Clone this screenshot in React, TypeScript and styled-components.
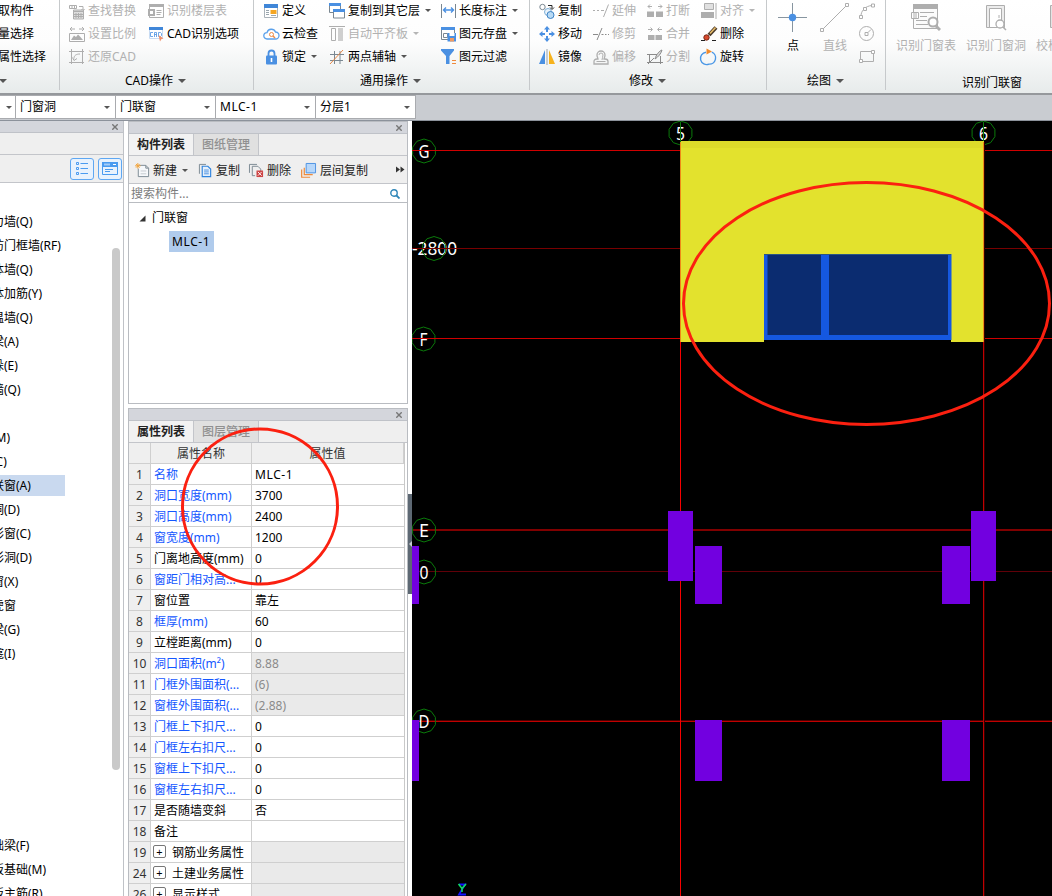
import React from 'react';
import styled, { createGlobalStyle } from 'styled-components';

const Global = createGlobalStyle`
  html, body { margin: 0; padding: 0; overflow: hidden; }
  body {
    font-family: "Noto Sans", "Noto Sans CJK SC", sans-serif;
    font-size: 12px;
    line-height: 16px;
    color: #000;
    background: #fff;
  }
  * { box-sizing: border-box; }
  svg { display: block; flex: none; }
`;

/* ---------- frame ---------- */

const Window = styled.div`
  position: relative;
  width: 1052px;
  height: 896px;
  overflow: hidden;
  display: flex;
  flex-direction: column;
  background: #fff;
`;

const Ribbon = styled.header`
  flex: none;
  height: 93px;
  display: flex;
  background: linear-gradient(#ffffff 0%, #fdfdfd 45%, #e7ebeb 100%);
`;

const Group = styled.section<{ $w: number }>`
  flex: none;
  position: relative;
  width: ${p => p.$w}px;
  display: flex;
  flex-direction: column;
  white-space: nowrap;

  &::after {
    content: "";
    position: absolute;
    right: 0;
    top: 0;
    width: 1px;
    height: 90px;
    background: #c6c9cb;
  }
`;

const GroupBody = styled.div`
  flex: none;
  display: flex;
  height: 69px;
  margin-top: -1px;
`;

const GroupTitle = styled.div<{ $left: number; $down?: boolean }>`
  display: flex;
  align-items: center;
  gap: 6px;
  height: 25px;
  padding-left: ${p => p.$left}px;
  padding-top: ${p => (p.$down ? 4 : 0)}px;
`;

const Column = styled.div<{ $w?: number; $left?: number }>`
  flex: none;
  display: flex;
  flex-direction: column;
  width: ${p => (p.$w ? p.$w + 'px' : 'auto')};
  margin-left: ${p => p.$left || 0}px;
`;

const ToolItem = styled.div<{ $off?: boolean }>`
  display: flex;
  align-items: center;
  gap: 3px;
  height: 23px;
  color: ${p => (p.$off ? '#b1b1b1' : '#000')};
`;

const Arrow = styled.i<{ $big?: boolean; $off?: boolean }>`
  flex: none;
  width: 0;
  height: 0;
  margin-left: ${p => (p.$big ? -1 : 2)}px;
  border: solid transparent;
  border-width: ${p => (p.$big ? '4px 4px 0' : '3px 3px 0')};
  border-top-color: ${p => (p.$off ? '#b5b5b5' : '#555')};
`;

const BigTool = styled.div<{ $w: number; $off?: boolean }>`
  flex: none;
  display: flex;
  flex-direction: column;
  align-items: center;
  width: ${p => p.$w}px;
  height: 56px;
  justify-content: space-between;
  padding-top: 3px;
  padding-bottom: 1px;
  color: ${p => (p.$off ? '#b1b1b1' : '#000')};
`;

const ComboBar = styled.div`
  flex: none;
  height: 28px;
  display: flex;
  align-items: flex-start;
  background: #c9ccd1;
  border-top: 2px solid #95989c;
  border-bottom: 1px solid #8c929b;
`;

const Combo = styled.div<{ $w: number; $wide?: boolean }>`
  flex: none;
  width: ${p => p.$w}px;
  height: 24px;
  display: flex;
  align-items: center;
  justify-content: space-between;
  padding: 0 5px 0 4px;
  letter-spacing: ${p => (p.$wide ? '0.5px' : 'normal')};
  background: #fff;
  border: solid #a9abaf;
  border-width: 1px 1px 1px 0;
`;

const Workspace = styled.main`
  flex: 1;
  min-height: 0;
  display: flex;
`;

/* ---------- docked panels ---------- */

const NavPanel = styled.aside`
  flex: none;
  width: 124px;
  display: flex;
  flex-direction: column;
  border-right: 1px solid #bfc2c7;
`;

const PanelBar = styled.div`
  flex: none;
  height: 12px;
  display: flex;
  align-items: center;
  justify-content: flex-end;
  padding: 1px 5px 0 0;
  background: #d4d6dc;
  border-bottom: 1px solid #bfc2c8;
`;

const NavBlank = styled.div`
  flex: none;
  height: 22px;
  background: #efefef;
  border-bottom: 1px solid #c3c5ca;
`;

const NavTools = styled.div`
  flex: none;
  height: 28px;
  display: flex;
  align-items: center;
  justify-content: flex-end;
  gap: 4px;
  padding-right: 1px;
  background: #efefef;
  border-bottom: 1px solid #c3c5ca;
`;

const ViewButton = styled.button`
  width: 24px;
  height: 22px;
  padding: 0;
  display: flex;
  align-items: center;
  justify-content: center;
  background: #e8f2fd;
  border: 1px solid #5ea7f2;
  border-radius: 3px;
`;

const NavBody = styled.div`
  flex: 1;
  display: flex;
  justify-content: space-between;
  overflow: hidden;
  padding: 4px 3px 0 0;
`;

const NavList = styled.div`
  width: 66px;
`;

const NavRow = styled.div<{ $on?: boolean }>`
  height: 21px;
  width: 65px;
  margin: 0 0 3px;
  line-height: 21px;
  text-indent: -20px;
  white-space: nowrap;
  overflow: hidden;
  background: ${p => (p.$on ? '#c9d9ef' : 'transparent')};
`;

const Thumb = styled.div`
  width: 8px;
  height: 522px;
  margin-top: 61px;
  border-radius: 4px;
  background: #c9c9c9;
`;

const MiddleColumn = styled.div`
  flex: none;
  width: 284px;
  display: flex;
`;

const Panels = styled.div`
  flex: none;
  width: 280px;
  margin-left: 4px;
  display: flex;
  flex-direction: column;
  gap: 4px;
`;

const Panel = styled.section<{ $h: number }>`
  flex: none;
  height: ${p => p.$h}px;
  display: flex;
  flex-direction: column;
  overflow: hidden;
  border: 1px solid #b9bcc1;
`;

const Tabs = styled.div`
  flex: none;
  height: 22px;
  display: flex;
  background: #efefef;
  border-bottom: 1px solid #c3c5ca;
`;

const Tab = styled.div<{ $on?: boolean }>`
  width: 65px;
  line-height: 21px;
  text-align: center;
  font-weight: ${p => (p.$on ? 600 : 500)};
  color: ${p => (p.$on ? '#222' : '#909090')};
  background: ${p => (p.$on ? '#f2f2f2' : '#e0e0e0')};
  border-right: 1px solid #c3c5ca;
`;

const ListTools = styled.div`
  flex: none;
  height: 28px;
  display: flex;
  align-items: center;
  padding-left: 6px;
  color: #222;
  background: #efefef;
  border-bottom: 1px solid #c3c5ca;
`;

const ListTool = styled.div<{ $w: number; $gap: number }>`
  width: ${p => p.$w}px;
  display: flex;
  align-items: center;
  gap: ${p => p.$gap}px;
  padding-top: 2px;
  white-space: nowrap;
`;

const Search = styled.div`
  flex: none;
  height: 19px;
  display: flex;
  align-items: center;
  justify-content: space-between;
  padding: 1px 7px 0 2px;
  color: #7c7c7c;
  border-bottom: 1px solid #b9bcc1;
`;

const Tree = styled.div`
  flex: 1;
  padding-top: 3px;
`;

const TreeRoot = styled.div`
  height: 24px;
  display: flex;
  align-items: center;
  gap: 6px;
  padding-left: 10px;
`;

const TreeLeaf = styled.div`
  width: 45px;
  height: 21px;
  margin: 1px 0 0 40px;
  padding-left: 3px;
  line-height: 21px;
  letter-spacing: 0.6px;
  background: #b0cbec;
`;

const Table = styled.div`
  width: 276px;
  border-right: 1px solid #c9c9c9;
`;

const TableRow = styled.div`
  display: grid;
  grid-template-columns: 22px 101px 1fr;
  height: 21px;
`;

const Cell = styled.div<{ $kind?: 'num' | 'head' | 'key' | 'linked' | 'value' | 'locked'; $wide?: boolean }>`
  display: flex;
  align-items: center;
  gap: 6px;
  min-width: 0;
  overflow: hidden;
  white-space: nowrap;
  padding-left: 3px;
  padding-top: 1px;
  letter-spacing: ${p => (p.$wide ? '0.6px' : 'normal')};
  border: solid #cfcfcf;
  border-width: 0 1px 1px 0;
  ${p => p.$kind === 'value' || p.$kind === 'locked' ? 'border-right: 0;' : ''}
  ${p => p.$kind === 'num' || p.$kind === 'head' ? 'justify-content: center; padding-left: 0; background: #efefef; color: #333;' : ''}
  ${p => p.$kind === 'linked' ? 'color: #1457ff;' : ''}
  ${p => p.$kind === 'locked' ? 'background: #eaeaea; color: #8a8a8a;' : ''}
`;

const Expand = styled.span`
  flex: none;
  width: 13px;
  height: 13px;
  margin: -2px 0 0 -1px;
  display: flex;
  align-items: center;
  justify-content: center;
  border: 1px solid #777;
  border-radius: 2px;
  font-size: 11px;
  line-height: 10px;
`;

const Splitter = styled.div`
  flex: none;
  width: 4px;
  height: 100px;
  margin-top: 373px;
  display: flex;
  align-items: center;
  background: #5d6873;
`;

const Viewport = styled.div`
  flex: 1;
  background: #000;
`;

const MarkLayer = styled.svg`
  position: absolute;
  left: 0;
  top: 0;
  pointer-events: none;
`;

/* ---------- icons ---------- */

const G = '#aeaeae';
const B = '#4a90e2';
const D = '#7a8791';

const icons: Record<string, React.ReactNode> = {
  find: <><path d="M0.5 2.5h7v3h-7zM3 2.5v3M5.5 2.5v3M10 3.5h4v4M12.5 6l1.5 2 1.5-2" /><path d="M4.500 7h10v9h-10z" fill="#dedede" /><path d="M4.500 8.500h10M7 10v5M9.500 10v5M12 10v5M5 11.500h9M5 13.500h9" /></>,
  scale: <><path d="M1 3h5M3 1L1 3l2 2M10 3h5M13 1l2 2-2 2M.5 7.500h15v8H.5z" /><path d="M2 14l3-4.500 2 1.500 2-2.500 2 2 3 3.500z" fill={G} stroke="none" /></>,
  restore: <><path d="M0 2.500h15M2.500 0v15M0 13.500h15M13.500 0v15M5 9.500c0-3 2-4.500 6-4.500M3.500 8.500l1.500 3 3-2" /></>,
  floor: <><path d="M1.500 1.500h14v13h-14z" /><path d="M1 1h15v3H1zM0 6h7v7H0z" fill={G} stroke="none" /><path d="M2 8h3v3H2z" fill="#fff" stroke="none" /><path d="M8.500 7.500h5M8.500 9.500h5M8.500 11.500h4" /></>,
  cad: <><path d="M1.500 1.500h13v11h-13z" stroke="#c9dcf3" fill="#fff" /><path d="M1 1h14v3H1z" fill="#3f86d8" stroke="none" /><path d="M5 6.500H2.500v4H5M6.500 11V6.500h2V11M6.500 8.500h2M10.500 6.500v4h2l1-1v-2l-1-1z" stroke={B} strokeWidth=".8" /><path d="M10.500 9l5 3.500-2 .5-1.500 2.500z" fill="#f0916c" stroke="none" /></>,
  define: <><path d="M1.500 2.500h13v12h-13z" stroke="#aab2b9" fill="#fff" /><path d="M1 1h14v4H1z" fill="#3f86d8" stroke="none" /><path d="M3 7.500h3M3 9.500h3M3 11.500h3M8 12.500h5" stroke="#9aa6ae" /><path d="M7.500 7h6v4h-6z" fill="#f5a623" stroke="none" /></>,
  cloud: <><path d="M4 13a3.200 3.200 0 010-6.400A4.500 4.500 0 0112.500 6 3.500 3.500 0 0112.500 13z" stroke="#5aa0ea" strokeWidth="1.300" /><circle cx="8.500" cy="8.500" r="2" stroke="#ee8b45" /><path d="M10 10l2 2" stroke="#ee8b45" strokeWidth="1.400" /></>,
  lock: <><path d="M5.500 7V4.500a3 3 0 016 0V7" stroke={B} strokeWidth="1.800" /><rect x="3" y="6.500" width="11" height="9" rx="1" fill={B} stroke="none" /><path d="M8.500 9v4" stroke="#fff" strokeWidth="1.600" /></>,
  copyFloor: <><path d="M.5 1.500h11v8H.5z" stroke={D} fill="#fff" /><path d="M0 0h12v3H0z" fill={B} stroke="none" /><path d="M4.500 7.500h11v7.500h-11z" stroke={D} fill="#fff" /><path d="M4 6h12v3H4z" fill={B} stroke="none" /></>,
  align: <><path d="M0 .5h16M2.500 2.500h4v12h-4z" /><path d="M9 2h5v13H9z" fill="#cfcfcf" stroke="none" /></>,
  axis: <><path d="M1 5.500h14M1 11.500h13M5.500 2v13M11 2v13" stroke={D} /><path d="M1 15L14 1" stroke="#e98845" /></>,
  measure: <><path d="M1.500 1v14M15.500 1v14" stroke={D} /><path d="M3.500 7h10M6 4.500L3.500 7 6 9.500M11 4.500L13.500 7 11 9.500" stroke={B} strokeWidth="1.400" /></>,
  save: <><path d="M1.500 1.500h13v12h-13z" stroke={D} fill="#fff" /><path d="M1 1h14v3H1z" fill={B} stroke="none" /><path d="M3.500 7.500h4v4h-4z" stroke={D} /><path d="M7.500 7H16v8.500H7.500z" fill={B} stroke="none" /><path d="M9.500 7h5v3h-5z" fill="#fff" stroke="none" /><path d="M10 12h4v3.500h-4z" fill="#ef9b62" stroke="none" /></>,
  filter: <><path d="M1 0h13v1.500L9.500 7v8H6V7L1 1.500z" fill={B} stroke="none" /><path d="M12 11.500h4M12 14.500h4" stroke="#f08a3c" /></>,
  copy: <><circle cx="3.500" cy="4" r="2.700" stroke={D} /><path d="M9 2.500h4v3M11 4.500l2 2 2-2" stroke="#222" /><circle cx="9" cy="9" r="3.500" stroke="#7fb0d8" fill="#eaf3fb" /><circle cx="11.500" cy="12" r="3.500" stroke="#3c82c4" fill="#b8daf5" /></>,
  move: <g fill={B} stroke="none"><path d="M8 0l3 3.500H9v2.500H7V3.500H5zM8 16l3-3.500H9V10H7v2.500H5zM0 8l3.500-3v2H6v2H3.500v2zM16 8l-3.500-3v2H10v2h2.500v2z" /></g>,
  mirror: <><path d="M6 1v14H0z" fill={B} stroke="none" /><path d="M10 1v14h6z" fill="#f6b21c" stroke="none" /><path d="M8 0v16" stroke="#98a3ab" /></>,
  extend: <path d="M0 7.500h2M4 7.500h2M8 7.500h3M15.500 1.500L10.500 14" />,
  trim: <path d="M0 8.500h5M8.500 8.500h2M12 8.500h1.500M15 8.500h1M9 2L4 14" stroke="#8b8b8b" />,
  offset: <><path d="M1 15h14v-2.500c0-1.500-1-2.500-3-2.500h-1c0-1 1-2 1-4a4 4 0 00-8 0c0 2 1 3 1 4H4c-2 0-3 1-3 2.500z" strokeWidth="1.300" /><path d="M3.500 12.500h9M6 6a2 2 0 014 0c0 2-1 3-1 5" /></>,
  breakI: <><path d="M1 3.500h4M3 1.500l-2 2 2 2M11 3.500h4M13 1.500l2 2-2 2" /><path d="M0 8.500h7V14H0zM9 8.500h7V14H9z" fill={G} stroke="none" /></>,
  merge: <><path d="M1 3.500h4M3.500 1.500l2 2-2 2M11 3.500h4M12.500 1.500l-2 2 2 2" /><path d="M1 9h6.500v5H1zM8.500 9H15v5H8.500z" fill={G} stroke="none" /></>,
  split: <><path d="M0 5.500h10M2.500 5v9M0 13.500h16M13.500 7v8M1 15L7 9" stroke="#8b8b8b" /><path d="M15 1c-3 1-6 5-7 9 3-2 6-5 7-9z" fill="#d8d8d8" stroke="#8b8b8b" /></>,
  alignObj: <><path d="M3.500.5h9v6h-9z" fill="#e0e0e0" /><path d="M0 9h13v6H0z" fill={G} stroke="none" /><path d="M15 0v16" /></>,
  brush: <><path d="M0 14.500h4M11 14.500h4" stroke="#222" /><path d="M15 1.500L8 9" stroke="#4a3a2a" strokeWidth="4" /><path d="M14.500 1.500L9 7.500" stroke="#e8bd6a" strokeWidth="1.600" /><circle cx="5.500" cy="11.500" r="2.700" fill="#d8492c" stroke="#742818" /></>,
  rotate: <><path d="M5 3.200A6.200 6.200 0 108 15.100 6.200 6.200 0 0010.800 3.200" stroke="#4a97e6" strokeWidth="1.400" /><path d="M5.500 -.5l5.500 3-5.500 3z" fill="#f08a2c" stroke="none" /></>,
  arc: <><path d="M2 13C2 8 6 3 13 2.500" /><path d="M.5 12.500h3v3h-3zM4.500 4.500h3v3h-3zM12.500 1h3v3h-3z" fill="#fff" /></>,
  circle: <><circle cx="7.500" cy="7.500" r="7" /><path d="M6 6.500h3v3H6zM9 6.500l3-3" /></>,
  rect: <><path d="M1.500 2.500h13v10h-13z" /><path d="M.5 10.500h3v3h-3zM12.500 1.500h3v3h-3z" fill="#fff" /></>,
  newDoc: <><path d="M4.500 2.500h7l3 3v9h-11V6M11.500 2.500v3h3" stroke={D} fill="#f6f8fa" /><path d="M6 8.500h6M6 11.500h6" stroke="#c3c9ce" /><path d="M3 0v6M0 3h6M1 1l4 4M5 1L1 5" stroke="#f1a33c" /></>,
  copyDoc: <><path d="M1.500 11.500v-10h7" stroke={D} /><path d="M4.500 3.500h6l3 3v8h-9z" fill="#e5f0fc" stroke="#2f83dd" strokeWidth="1.200" /><path d="M6.500 7.500h5M6.500 9.500h5M6.500 11.500h5" stroke={B} /></>,
  delDoc: <><path d="M.5 10.500v-9h8M3.500 13.500v-10h6l3 3v2M3.500 13.500h3" stroke={D} /><path d="M8 8h7v7H8z" fill="#cd4444" stroke="none" /><path d="M9.500 9.500l4 4M13.500 9.500l-4 4" stroke="#fff" /></>,
  layerCopy: <><path d="M.7 7v8.200h9M3.500 5v7.500h9" stroke="#ee8b3c" strokeWidth="1.300" /><path d="M5.500.5h10v10h-10z" stroke={B} fill="#b7d7fa" /></>,
};

const Icon = ({ name, size = 16 }: { name: string; size?: number }) => (
  <svg width={size} height={size} viewBox="0 0 16 16" fill="none" stroke={G} strokeWidth="1" overflow="visible">{icons[name]}</svg>
);

const Close = () => (
  <svg width="6" height="6" viewBox="0 0 6 6" stroke="#777" strokeWidth="1.400"><path d="M.3.3l5.400 5.400M5.700.3L.3 5.700" /></svg>
);

type ToolProps = { icon?: string; label?: string; off?: boolean; menu?: boolean };

const Tool = ({ icon, label, off, menu }: ToolProps) => (
  <ToolItem $off={off}>
    {icon && <Icon name={icon} />}
    {label && <span>{label}</span>}
    {menu && <Arrow $off={off} />}
  </ToolItem>
);

/* ---------- data ---------- */

const navRows: string[] = [
  '', '剪力墙(Q)', '人防门框墙(RF)', '砌体墙(Q)', '砌体加筋(Y)', '保温墙(Q)', '暗梁(A)', '墙垛(E)', '幕墙(Q)', '',
  '门(M)', '窗(C)', '门联窗(A)', '墙洞(D)', '带形窗(C)', '带形洞(D)', '飘窗(X)', '老虎窗', '过梁(G)', '壁龛(I)',
  '', '', '', '', '', '', '', '基础梁(F)', '筏板基础(M)', '筏板主筋(R)',
];

type Prop = { n: number; key: string; value?: string; linked?: boolean; locked?: boolean; group?: boolean };

const props: Prop[] = [
  { n: 1, key: '名称', value: 'MLC-1', linked: true },
  { n: 2, key: '洞口宽度(mm)', value: '3700', linked: true },
  { n: 3, key: '洞口高度(mm)', value: '2400', linked: true },
  { n: 4, key: '窗宽度(mm)', value: '1200', linked: true },
  { n: 5, key: '门离地高度(mm)', value: '0' },
  { n: 6, key: '窗距门相对高...', value: '0', linked: true },
  { n: 7, key: '窗位置', value: '靠左' },
  { n: 8, key: '框厚(mm)', value: '60', linked: true },
  { n: 9, key: '立樘距离(mm)', value: '0' },
  { n: 10, key: '洞口面积(m²)', value: '8.88', linked: true, locked: true },
  { n: 11, key: '门框外围面积(...', value: '(6)', linked: true, locked: true },
  { n: 12, key: '窗框外围面积(...', value: '(2.88)', linked: true, locked: true },
  { n: 13, key: '门框上下扣尺...', value: '0', linked: true },
  { n: 14, key: '门框左右扣尺...', value: '0', linked: true },
  { n: 15, key: '窗框上下扣尺...', value: '0', linked: true },
  { n: 16, key: '窗框左右扣尺...', value: '0', linked: true },
  { n: 17, key: '是否随墙变斜', value: '否' },
  { n: 18, key: '备注' },
  { n: 19, key: '钢筋业务属性', locked: true, group: true },
  { n: 24, key: '土建业务属性', locked: true, group: true },
  { n: 26, key: '显示样式', locked: true, group: true },
];

/* ---------- drawing ---------- */

const octagon = (cx: number, cy: number) => {
  const pts: string[] = [];
  for (let i = 0; i < 10; i++) {
    const a = (Math.PI * 2 * i) / 10 - Math.PI / 2;
    pts.push(`${(cx + 12 * Math.cos(a)).toFixed(1)},${(cy + 12 * Math.sin(a)).toFixed(1)}`);
  }
  return pts.join(' ');
};

const AxisLabel = ({ x, y, text, w, cx = x }: { x: number; y: number; text: string; w: number; cx?: number }) => (
  <>
    <text x={x} y={y + 6.5} textAnchor="middle" textLength={w} lengthAdjust="spacingAndGlyphs" fontSize="18.5" fill="#fff">{text}</text>
    <polygon points={octagon(cx, y)} fill="none" stroke="#0b7a0b" strokeWidth="1" />
  </>
);

const columns = [
  [668, 511, 25, 70], [695, 546, 27, 58], [971, 511, 25, 70], [942, 546, 28, 58],
  [412, 546, 7, 58], [412, 720, 7, 61], [695, 720, 27, 61], [942, 720, 28, 61],
];

const Drawing = () => (
  <svg width="640" height="775" viewBox="412 121 640 775" fontFamily='"Noto Sans", sans-serif'>
    <AxisLabel x={424} y={151} text="G" w={11} />
    <AxisLabel x={434.5} y={248.5} text="-2800" w={45} cx={434} />
    <AxisLabel x={423.5} y={339} text="F" w={8} />
    <AxisLabel x={680.5} y={133} text="5" w={9} />
    <AxisLabel x={983.5} y={133} text="6" w={9} />
    <path d="M680.5 122v20M983.5 122v20" stroke="#0b7a0b" />
    <g fill="none" strokeWidth="1">
      <path d="M412 150.5h640M412 338.5h640" stroke="#d00000" />
      <path d="M412 248.5h640" stroke="#780000" />
      <path d="M412 530h640" stroke="#800000" strokeWidth="2" />
      <path d="M412 571.5h640" stroke="#600008" />
      <path d="M412 720.5h640" stroke="#4a0000" />
      <path d="M412 721.5h640" stroke="#c00000" />
      <path d="M680.5 142v754" stroke="#f80000" />
      <path d="M983.5 142v754" stroke="#c00000" />
      <path d="M984.5 142v754" stroke="#300000" />
    </g>
    <AxisLabel x={424} y={530} text="E" w={10} />
    <AxisLabel x={424} y={572} text="0" w={9} />
    <AxisLabel x={424} y={721} text="D" w={11} />
    <path d="M681 141H984V342H951V254H764V342H681z" fill="#e3e22d" />
    <path d="M681 141H984v7H681z" fill="#dddb2a" />
    <path d="M680.5 142v200M983.5 142v200" stroke="#ee8a18" />
    <path d="M764 254h187.5v86H764z" fill="#1558e0" />
    <path d="M767.5 255h53.500v80h-53.500zM829 255h119v80H829z" fill="#0b2c70" />
    <path d="M764 254.5h187" stroke="#2a5683" />
    {columns.map(([x, y, w, h], i) => <rect key={i} x={x} y={y} width={w} height={h} fill="#7200e0" />)}
    <path d="M459 884.5h6l-6 10h7" fill="none" stroke="#1212ff" strokeWidth="1.800" />
    <path d="M458.5 884l3.500 4.500 4-4.500M462 888v4" fill="none" stroke="#10e060" strokeWidth="1.500" />
  </svg>
);

export default function App() {
  return (
    <Window>
      <Global />
      <Ribbon>
        <Group $w={60}>
          <GroupBody>
            <Column $left={-2}>
              <Tool label="取构件" />
              <Tool label="量选择" />
              <Tool label="属性选择" />
            </Column>
          </GroupBody>
          <GroupTitle $left={-1}><Arrow $big /></GroupTitle>
        </Group>

        <Group $w={194}>
          <GroupBody>
            <Column $left={9} $w={79}>
              <Tool icon="find" label="查找替换" off />
              <Tool icon="scale" label="设置比例" off />
              <Tool icon="restore" label="还原CAD" off />
            </Column>
            <Column>
              <Tool icon="floor" label="识别楼层表" off />
              <Tool icon="cad" label="CAD识别选项" />
            </Column>
          </GroupBody>
          <GroupTitle $left={65}>CAD操作<Arrow $big /></GroupTitle>
        </Group>

        <Group $w={276}>
          <GroupBody>
            <Column $left={9} $w={66}>
              <Tool icon="define" label="定义" />
              <Tool icon="cloud" label="云检查" />
              <Tool icon="lock" label="锁定" menu />
            </Column>
            <Column $w={111}>
              <Tool icon="copyFloor" label="复制到其它层" menu />
              <Tool icon="align" label="自动平齐板" off menu />
              <Tool icon="axis" label="两点辅轴" menu />
            </Column>
            <Column>
              <Tool icon="measure" label="长度标注" menu />
              <Tool icon="save" label="图元存盘" menu />
              <Tool icon="filter" label="图元过滤" />
            </Column>
          </GroupBody>
          <GroupTitle $left={106}>通用操作<Arrow $big /></GroupTitle>
        </Group>

        <Group $w={237}>
          <GroupBody>
            <Column $left={9} $w={54}>
              <Tool icon="copy" label="复制" />
              <Tool icon="move" label="移动" />
              <Tool icon="mirror" label="镜像" />
            </Column>
            <Column $w={54}>
              <Tool icon="extend" label="延伸" off />
              <Tool icon="trim" label="修剪" off />
              <Tool icon="offset" label="偏移" off />
            </Column>
            <Column $w={54}>
              <Tool icon="breakI" label="打断" off />
              <Tool icon="merge" label="合并" off />
              <Tool icon="split" label="分割" off />
            </Column>
            <Column>
              <Tool icon="alignObj" label="对齐" off menu />
              <Tool icon="brush" label="删除" />
              <Tool icon="rotate" label="旋转" />
            </Column>
          </GroupBody>
          <GroupTitle $left={99}>修改<Arrow $big /></GroupTitle>
        </Group>

        <Group $w={119}>
          <GroupBody>
            <Column $left={5}>
              <BigTool $w={42}>
                <svg width="30" height="30" viewBox="0 0 30 30"><path d="M0 15.500h29M14.500 1v29" stroke="#8795a0" /><circle cx="14.500" cy="15.500" r="3.700" fill={B} /></svg>
                点
              </BigTool>
            </Column>
            <BigTool $w={42} $off>
              <svg width="30" height="30" viewBox="0 0 30 30" fill="#fff" stroke={G}><path d="M3 27L27 3" /><path d="M.5 26.500h3v3h-3zM25.500 1.500h3v3h-3z" /></svg>
              直线
            </BigTool>
            <Column $left={3}>
              <Tool icon="arc" />
              <Tool icon="circle" />
              <Tool icon="rect" />
            </Column>
          </GroupBody>
          <GroupTitle $left={40}>绘图<Arrow $big /></GroupTitle>
        </Group>

        <Group $w={240}>
          <GroupBody>
            <Column $left={6}>
              <BigTool $w={68} $off>
                <svg width="30" height="30" viewBox="0 0 30 30" fill="none" stroke={G}>
                  <path d="M2.500 2.500h24v24h-24z" fill="#fbfbfb" /><path d="M2 2h25v5H2z" fill={G} stroke="none" />
                  <path d="M9 10.500h14M9 14.500h7M5 18.500h11M5 22.500h12" />
                  <path d="M.5 10.500h7v6h-7zM3 11v5M5 11v5" fill="#fff" />
                  <circle cx="22" cy="20" r="4.500" fill="#fff" strokeWidth="2" /><path d="M25 24l4 4" strokeWidth="3" />
                </svg>
                识别门窗表
              </BigTool>
            </Column>
            <BigTool $w={72} $off>
              <svg width="30" height="30" viewBox="0 0 30 30" fill="none" stroke={G}>
                <path d="M5.500 3.500h18v22h-18z" fill="#ececec" /><path d="M8.500 6.500h12v19h-12z" fill="#fff" /><path d="M18 13v3" />
                <circle cx="19" cy="22" r="4" fill="#fff" strokeWidth="1.300" /><path d="M22 25l3 3" strokeWidth="1.500" />
              </svg>
              识别门窗洞
            </BigTool>
            <BigTool $w={68} $off>
              <svg width="30" height="30" viewBox="0 0 30 30" fill="none" stroke={G} overflow="visible"><path d="M-.5 3.500h22v22h-22z" fill="#e4e4e4" /></svg>
              校核门联窗
            </BigTool>
          </GroupBody>
          <GroupTitle $left={76} $down>识别门联窗</GroupTitle>
        </Group>
      </Ribbon>

      <ComboBar>
        <Combo $w={16}><span /><Arrow /></Combo>
        <Combo $w={100}>门窗洞<Arrow /></Combo>
        <Combo $w={100}>门联窗<Arrow /></Combo>
        <Combo $w={100} $wide>MLC-1<Arrow /></Combo>
        <Combo $w={100}>分层1<Arrow /></Combo>
      </ComboBar>

      <Workspace>
        <NavPanel>
          <PanelBar><Close /></PanelBar>
          <NavBlank />
          <NavTools>
            <ViewButton>
              <svg width="14" height="14" viewBox="0 0 14 14" fill="none" stroke="#4a9bf0"><path d="M1.500.5h2v2h-2zM1.500 5.500h2v2h-2zM1.500 10.500h2v2h-2zM5.500 1.500H13M5.500 6.500H13M5.500 11.500H13" /></svg>
            </ViewButton>
            <ViewButton>
              <svg width="16" height="14" viewBox="0 0 16 14" fill="none" stroke="#4a9bf0"><path d="M.5.5h15v12H.5zM3 7.500h8M3 9.500h5" /><path d="M0 0h16v5H0z" fill="#4a9bf0" stroke="none" /><path d="M3 1.500v2M5 1.500v2M7 1.500v2M11 2.500h3" stroke="#fff" /></svg>
            </ViewButton>
          </NavTools>
          <NavBody>
            <NavList>
              {navRows.map((r, i) => <NavRow key={i} $on={r === '门联窗(A)'}>{r}</NavRow>)}
            </NavList>
            <Thumb />
          </NavBody>
        </NavPanel>

        <MiddleColumn>
          <Panels>
            <Panel $h={283}>
              <PanelBar><Close /></PanelBar>
              <Tabs><Tab $on>构件列表</Tab><Tab>图纸管理</Tab></Tabs>
              <ListTools>
                <ListTool $w={63} $gap={3}><Icon name="newDoc" size={15} />新建<Arrow /></ListTool>
                <ListTool $w={51} $gap={3}><Icon name="copyDoc" size={15} />复制</ListTool>
                <ListTool $w={52} $gap={3}><Icon name="delDoc" size={15} />删除</ListTool>
                <ListTool $w={95} $gap={4}><Icon name="layerCopy" size={15} />层间复制</ListTool>
                <svg width="9" height="7" viewBox="0 0 9 7" fill="#333"><path d="M0 .5l4 3-4 3zM4.500.5l4 3-4 3z" /></svg>
              </ListTools>
              <Search>
                搜索构件...
                <svg width="10" height="10" viewBox="0 0 10 10" fill="none" stroke="#2f86b8"><circle cx="4" cy="4" r="3.200" strokeWidth="1.400" /><path d="M6.500 6.500l3 3" strokeWidth="1.800" /></svg>
              </Search>
              <Tree>
                <TreeRoot><svg width="7" height="7" viewBox="0 0 7 7"><path d="M6.500.5v6h-6z" fill="#333" /></svg>门联窗</TreeRoot>
                <TreeLeaf>MLC-1</TreeLeaf>
              </Tree>
            </Panel>
            <Panel $h={490}>
              <PanelBar><Close /></PanelBar>
              <Tabs><Tab $on>属性列表</Tab><Tab>图层管理</Tab></Tabs>
              <Table>
                <TableRow>
                  <Cell $kind="head" /><Cell $kind="head">属性名称</Cell><Cell $kind="head">属性值</Cell>
                </TableRow>
                {props.map(p => (
                  <TableRow key={p.n}>
                    <Cell $kind="num">{p.n}</Cell>
                    <Cell $kind={p.linked ? 'linked' : 'key'}>{p.group && <Expand>+</Expand>}{p.key}</Cell>
                    <Cell $kind={p.locked ? 'locked' : 'value'} $wide={p.n === 1}>{p.value}</Cell>
                  </TableRow>
                ))}
              </Table>
            </Panel>
          </Panels>
          
        </MiddleColumn>
        <Splitter>
          <svg width="4" height="6" viewBox="0 0 4 6"><path d="M4 0v6L1 3z" fill="#c8ccd0" /></svg>
        </Splitter>
        <Viewport><Drawing /></Viewport>
      </Workspace>

      <MarkLayer width="1052" height="896" viewBox="0 0 1052 896" fill="none" stroke="#fb2010" strokeWidth="3">
        <circle cx="260" cy="506.500" r="77.500" />
        <ellipse cx="866.500" cy="303.500" rx="183" ry="121" />
      </MarkLayer>
    </Window>
  );
}
